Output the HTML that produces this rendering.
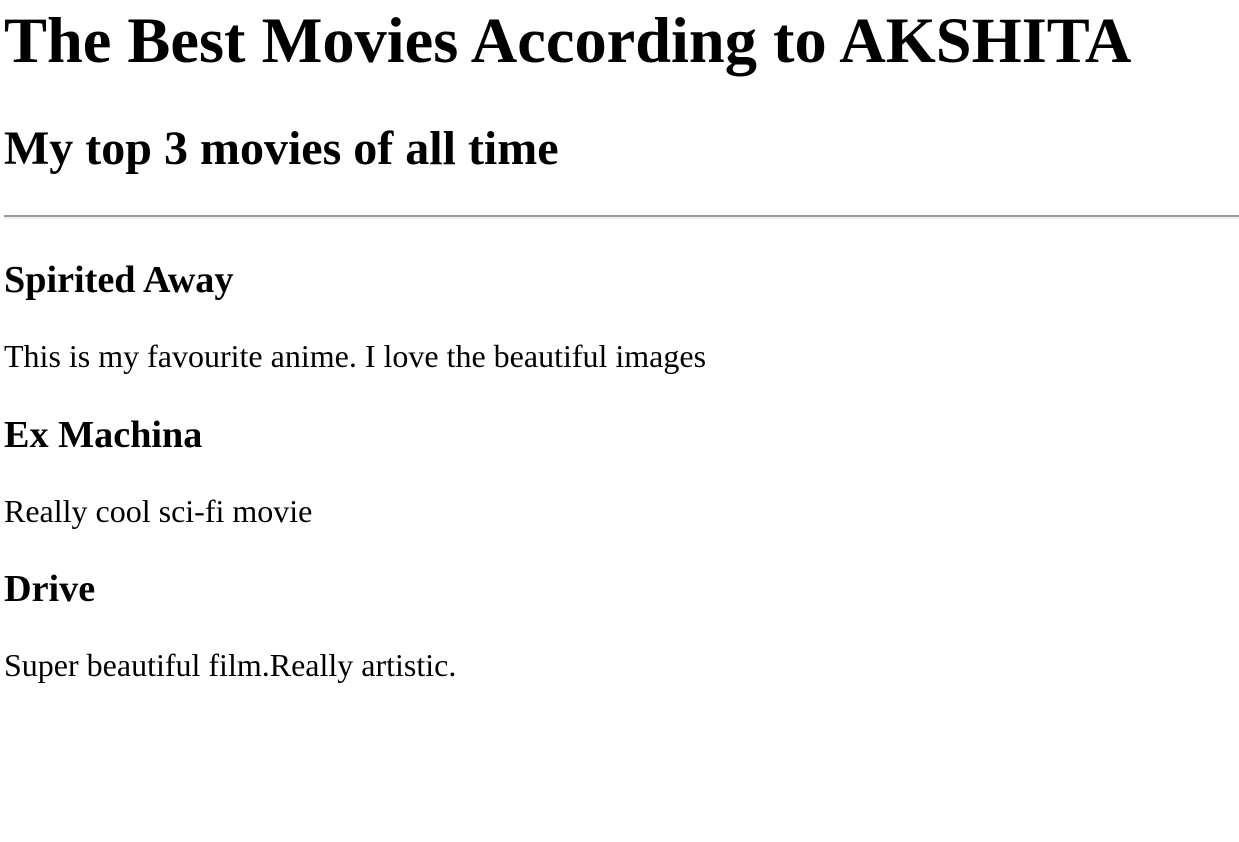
<!DOCTYPE html>
<html><head><meta charset="utf-8"><style>
html,body{margin:0;padding:0;background:#fff;width:1239px;height:842px;overflow:hidden}
body{font-family:"Liberation Serif",serif;color:#000;position:relative}
.t{position:absolute;left:4px;line-height:1;white-space:nowrap;margin:0}
h1.t{font-size:64.4px;font-weight:bold;top:9px}
h2.t{font-size:48px;font-weight:bold;top:125px}
h3.t{font-size:38.2px;font-weight:bold}
p.t{font-size:32px}
hr{position:absolute;left:4px;right:0;top:215px;margin:0;border:none;border-top:2px solid #9a9a9a;border-bottom:2px solid #eee;height:0}
</style></head><body>
<h1 class="t">The Best Movies According to AKSHITA</h1>
<h2 class="t">My top 3 movies of all time</h2>
<hr>
<h3 class="t" style="top:261px">Spirited Away</h3>
<p class="t" style="top:340px">This is my favourite anime. I love the beautiful images</p>
<h3 class="t" style="top:416px">Ex Machina</h3>
<p class="t" style="top:495px">Really cool sci-fi movie</p>
<h3 class="t" style="top:570px">Drive</h3>
<p class="t" style="top:649px">Super beautiful film.Really artistic.</p>
</body></html>
